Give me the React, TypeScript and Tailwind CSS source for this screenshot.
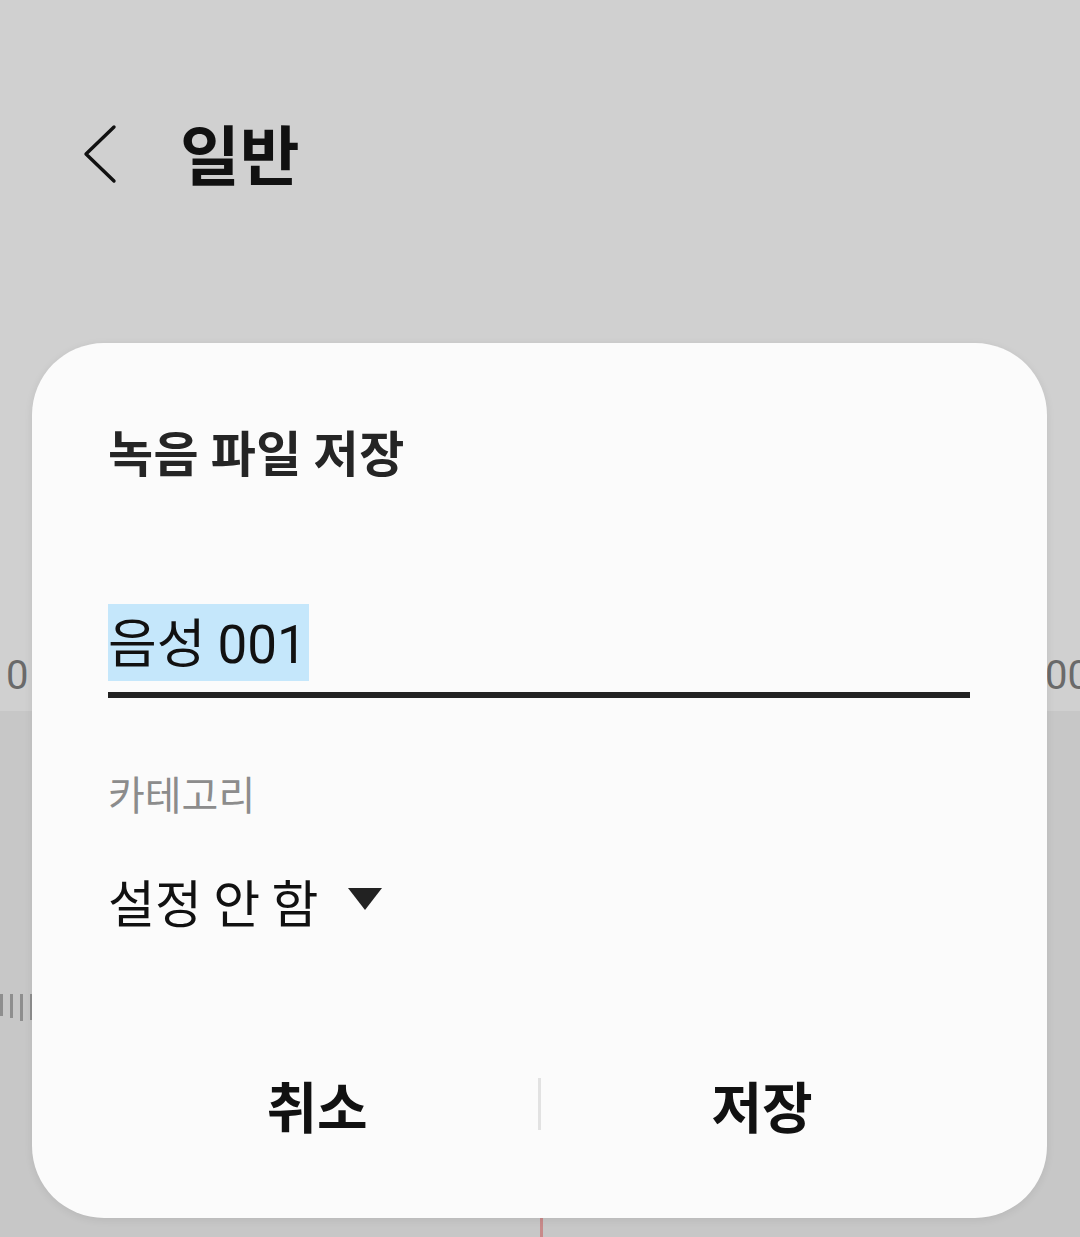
const font = { fontFamily: '"Noto Sans CJK KR", "Noto Sans", Roboto, sans-serif' };

export default function App() {
  return (
    <div className="relative h-[1237px] w-[1080px] overflow-hidden bg-[#c7c7c7]" style={font}>
      {/* background screen */}
      <div className="flex h-[711px] flex-col bg-[#d0d0d0]">
        <div className="flex h-[310px] items-start pt-[112px] pl-[82px]">
          <svg className="mt-[12px]" width="36" height="60" viewBox="0 0 36 60">
            <polyline points="32,3 4,30 32,57" fill="none" stroke="#111" strokeWidth="3.4" strokeLinecap="round" strokeLinejoin="round" />
          </svg>
          <span className="ml-[62px] text-[65px] font-bold leading-[80px] text-[#111]">일반</span>
        </div>
        <div className="mt-auto flex justify-between pb-[10px] text-[40px] leading-[50px] text-[#6a6a6a]" style={{ fontFamily: 'Roboto, sans-serif' }}>
          <span className="ml-[6px]">0</span>
          <span className="mr-[-10px]">00</span>
        </div>
      </div>
      <div className="mt-[283px] flex gap-[7px]">
        <div className="h-[22px] w-[3px] bg-[#8e8e8e]" />
        <div className="h-[24px] w-[3px] bg-[#8e8e8e]" />
        <div className="h-[27px] w-[3px] bg-[#8e8e8e]" />
        <div className="h-[26px] w-[3px] bg-[#8e8e8e]" />
      </div>
      <div className="absolute bottom-0 left-[540px] h-[25px] w-[3px] bg-[#c88a8a]" />

      {/* dialog */}
      <div className="absolute left-[32px] top-[343px] h-[875px] w-[1015px] rounded-[72px] bg-[#fbfbfb] shadow-[0_2px_8px_rgba(0,0,0,0.08)]">
        <div className="px-[76px] pt-[73px]">
          <div className="text-[49px] font-bold leading-[70px] tracking-[0.5px] text-[#252525]">녹음 파일 저장</div>
          <div className="mt-[118px]">
            <span className="inline-block bg-[#c5e7fb] pr-[2px] text-[53px] leading-[72px] text-[#111]">
              음성 <span style={{ fontFamily: 'Roboto, sans-serif' }}>001</span>
            </span>
          </div>
          <div className="mt-[11px] h-[6px] w-[862px] bg-[#222]" />
          <div className="mt-[73px] text-[40px] leading-[44px] text-[#8c8c8c]">카테고리</div>
          <div className="mt-[58px] flex items-center">
            <span className="text-[51px] leading-[56px] text-[#111]">설정 안 함</span>
            <svg className="ml-[28px] mt-[-4px]" width="36" height="26" viewBox="0 0 36 26">
              <polygon points="1,2 35,2 18,24" fill="#222" />
            </svg>
          </div>
        </div>
        <div className="absolute bottom-[86px] left-0 right-0 flex items-center px-[64px]">
          <div className="flex-1 text-center text-[55px] font-bold leading-[56px] text-[#111]">취소</div>
          <div className="h-[52px] w-[3px] bg-[#e2e2e2]" />
          <div className="flex-1 text-center text-[55px] font-bold leading-[56px] text-[#111]">저장</div>
        </div>
      </div>
    </div>
  );
}
